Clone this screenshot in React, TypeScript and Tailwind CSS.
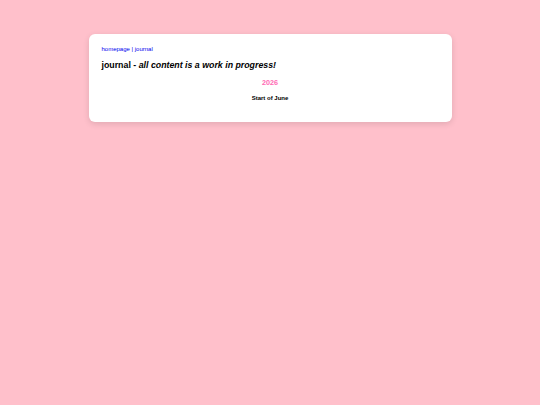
export default function App() {
  return (
    <main className="min-h-screen w-full bg-[#ffc0cb] pt-[34px] font-['Liberation_Sans',Arial,sans-serif]">
      <div className="mx-auto w-[363px] rounded-[6px] bg-white px-[13px] pt-[12px] pb-[20px] shadow-[0_2px_6px_rgba(0,0,0,0.12)]">
        <nav className="text-[6px] leading-[7px] text-[#0000ee]">
          <a href="#">homepage</a> | <a href="#">journal</a>
        </nav>
        <h1 className="mt-[7px] text-[8.8px] font-bold leading-[11px] text-black">
          journal - <em>all content is a work in progress!</em>
        </h1>
        <h2 className="mt-[7px] text-center text-[7.2px] font-bold leading-[9px] text-[#ff69b4]">2026</h2>
        <h3 className="mt-[8px] text-center text-[6px] font-bold leading-[7px] text-black">Start of June</h3>
      </div>
    </main>
  );
}
